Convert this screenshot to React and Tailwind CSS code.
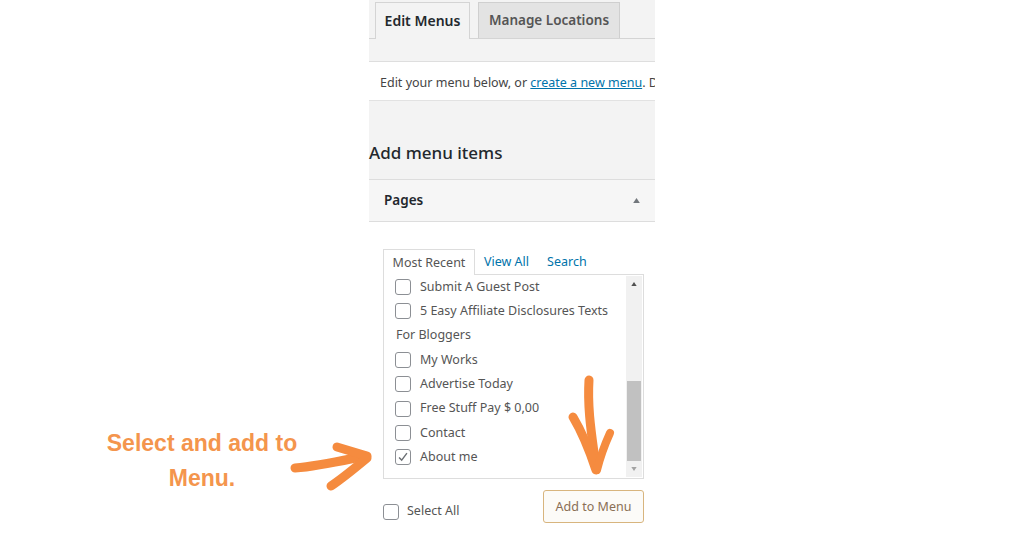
import React from "react";

const ITEMS = [
  { label: "Submit A Guest Post" },
  { label: "5 Easy Affiliate Disclosures Texts" },
  { label: "For Bloggers", heading: true },
  { label: "My Works" },
  { label: "Advertise Today" },
  { label: "Free Stuff Pay $ 0,00" },
  { label: "Contact" },
  { label: "About me", checked: true },
];

function Box({ checked }) {
  return (
    <span className="flex h-4 w-4 shrink-0 items-center justify-center rounded-[3px] border border-[#8c8f94] bg-white">
      {checked && (
        <svg viewBox="0 0 16 16" className="h-3.5 w-3.5">
          <path d="M3.5 8.5 L6.5 11.5 L12.5 3.5" fill="none" stroke="#6b6f74" strokeWidth="1.6" />
        </svg>
      )}
    </span>
  );
}

function ArrowRight() {
  return (
    <svg viewBox="0 0 95 55" className="absolute left-[285px] top-[438px] h-[55px] w-[95px]">
      <g fill="none" stroke="#f58b3f" strokeLinecap="round" strokeLinejoin="round">
        <path d="M10 30 C 35 28, 60 22, 80 18" strokeWidth="9" />
        <path d="M52 9 C 62 12, 72 15, 82 18" strokeWidth="9" />
        <path d="M82 20 C 70 30, 58 40, 46 48" strokeWidth="9" />
      </g>
    </svg>
  );
}

function ArrowDown() {
  return (
    <svg viewBox="0 0 60 110" className="absolute left-[562px] top-[372px] h-[110px] w-[60px]">
      <g fill="none" stroke="#f58b3f" strokeLinecap="round" strokeLinejoin="round">
        <path d="M27 8 C 25 40, 31 70, 34 96" strokeWidth="9" />
        <path d="M11 45 C 20 60, 28 80, 34 98" strokeWidth="9" />
        <path d="M48 61 C 43 72, 38 86, 35 98" strokeWidth="8" />
      </g>
    </svg>
  );
}

export default function App() {
  return (
    <div className="relative h-[535px] w-[1024px] overflow-hidden bg-white font-['Noto_Sans',sans-serif] text-[12.5px] text-[#444]">
      <div className="ml-[369px] w-[286px]">
        <div className="bg-[#f3f3f3]">
          <div className="flex h-[39px] items-end gap-2 border-b border-[#d4d4d4] pl-[6px]">
            <div className="-mb-px flex h-[37px] w-[95px] items-center justify-center border border-b-0 border-[#d4d4d4] bg-[#f3f3f3] pb-[1px] text-[14px] font-semibold text-[#23282d]">
              Edit Menus
            </div>
            <div className="flex h-[36px] w-[142px] items-center justify-center border border-b-0 border-[#cfcfcf] bg-[#e3e3e3] text-[13.5px] font-semibold text-[#555]">
              Manage Locations
            </div>
          </div>
          <div className="h-[23px] border-b border-[#dedede]" />
        </div>
        <div className="flex h-[39px] items-center overflow-hidden whitespace-nowrap border-b border-[#e2e2e2] bg-white pl-[11px] pt-[4px] text-[#444]">
          Edit your menu below, or&nbsp;
          <span className="text-[#0073aa] underline">create a new menu</span>. D
        </div>
        <div className="flex h-[78px] items-end bg-[#f3f3f3] pb-[14px] text-[17px] font-medium text-[#23282d]">
          Add menu items
        </div>
        <div className="flex h-[43px] items-center justify-between border-y border-[#dddddd] bg-[#f6f6f6] pl-[15px] pr-[15px]">
          <span className="text-[13.5px] font-semibold text-[#23282d]">Pages</span>
          <svg viewBox="0 0 8 6" className="h-[5px] w-[7px]">
            <path d="M0 6 L4 0 L8 6 Z" fill="#72777c" />
          </svg>
        </div>

        <div className="ml-[14px] mt-[27px] w-[261px]">
          <div className="flex items-end">
            <div className="-mb-px flex h-[26px] w-[92px] items-center justify-center border border-b-0 border-[#dddddd] bg-white pt-[2px] text-[#555]">
              Most Recent
            </div>
            <span className="ml-[9px] pb-[2px] text-[#0073aa]">View All</span>
            <span className="ml-[18px] pb-[2px] text-[#0073aa]">Search</span>
          </div>
          <div className="flex h-[205px] border border-[#dddddd] bg-white">
            <div className="flex flex-1 flex-col pl-[11px]">
              {ITEMS.map((it) =>
                it.heading ? (
                  <div key={it.label} className="flex h-[24.3px] items-center pl-[1px] text-[#555]">
                    {it.label}
                  </div>
                ) : (
                  <div key={it.label} className="flex h-[24.3px] items-center gap-[9px] text-[#555]">
                    <Box checked={it.checked} />
                    <span>{it.label}</span>
                  </div>
                )
              )}
            </div>
            <div className="my-[1px] mr-[1px] flex w-[16px] flex-col bg-[#f1f1f1]">
              <div className="flex h-[16px] items-center justify-center">
                <svg viewBox="0 0 8 6" className="h-[4px] w-[6px]">
                  <path d="M0 6 L4 0 L8 6 Z" fill="#505050" />
                </svg>
              </div>
              <div className="flex-1" />
              <div className="mx-[1px] h-[80px] bg-[#c1c1c1]" />
              <div className="flex h-[16px] items-center justify-center">
                <svg viewBox="0 0 8 6" className="h-[4px] w-[6px]">
                  <path d="M0 0 L4 6 L8 0 Z" fill="#a3a3a3" />
                </svg>
              </div>
            </div>
          </div>
          <div className="mt-[11px] flex items-center justify-between">
            <div className="flex items-center gap-[8px] pt-[10px] text-[#555]">
              <Box />
              <span>Select All</span>
            </div>
            <div className="flex h-[33px] w-[101px] items-center justify-center rounded-[3px] border border-[#d8b57e] bg-[#fcfbf8] pt-[1px] text-[#8a6f55]">
              Add to Menu
            </div>
          </div>
        </div>
      </div>

      <div className="absolute left-[88px] top-[426px] w-[228px] text-center font-['Liberation_Sans',Arial,sans-serif] text-[23px] font-bold leading-[35px] text-[#f4954d]">
        Select and add to
        <br />
        Menu.
      </div>
      <ArrowRight />
      <ArrowDown />
    </div>
  );
}
